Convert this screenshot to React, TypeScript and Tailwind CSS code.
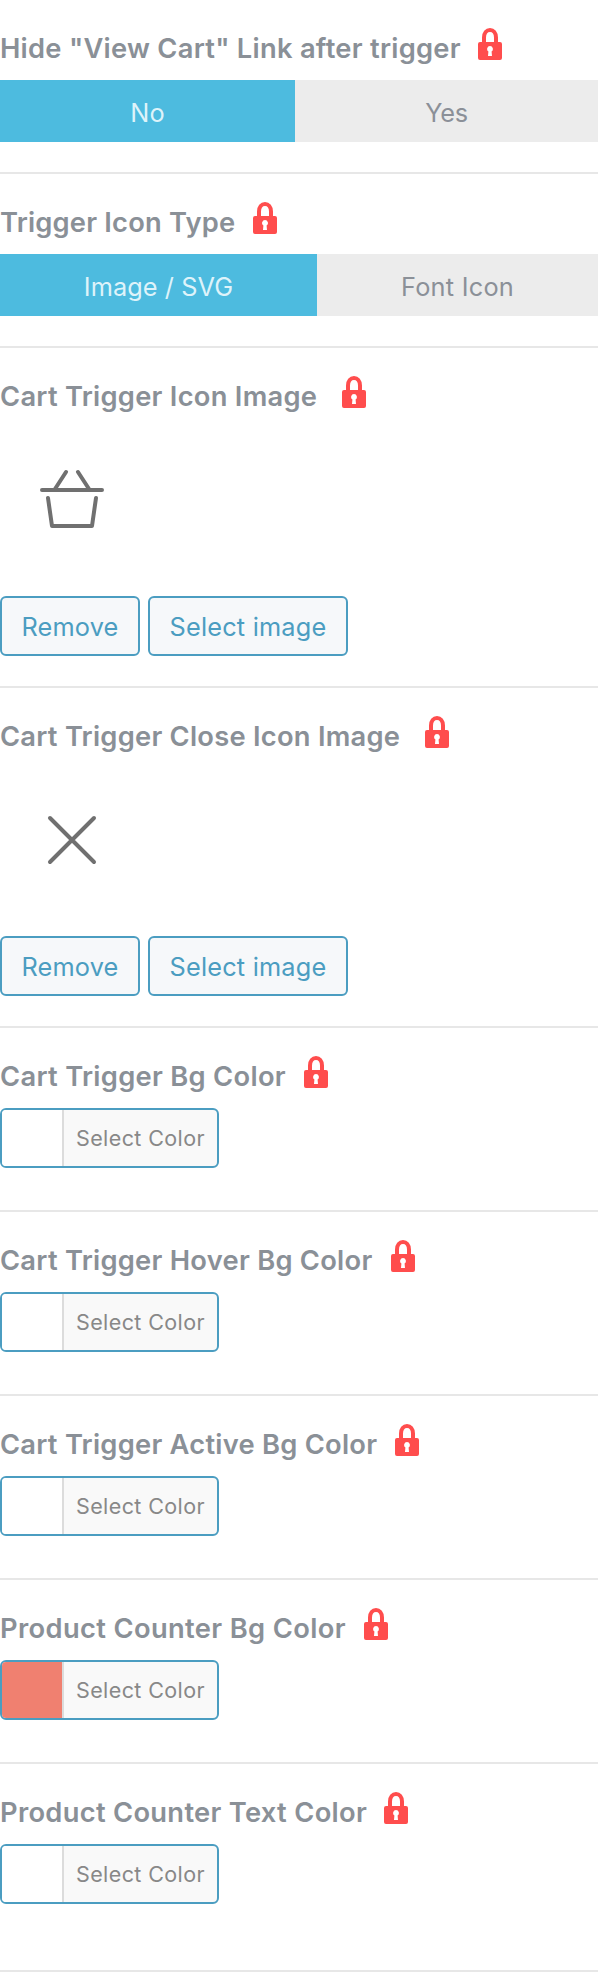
import type { ReactNode } from "react";

function Lock() {
  return (
    <svg width="24" height="32" viewBox="0 0 24 32" className="shrink-0" aria-hidden="true">
      <path d="M6 15V9.6C6 5 8.6 2 12 2s6 3 6 7.6V15" fill="none" stroke="#ff4d4d" strokeWidth="4" />
      <path
        fillRule="evenodd"
        fill="#ff4d4d"
        d="M2 14h20a2 2 0 0 1 2 2v14a2 2 0 0 1-2 2H2a2 2 0 0 1-2-2V16a2 2 0 0 1 2-2ZM12 18a3 3 0 0 0-1.6 5.5L10 28h4l-.4-4.5A3 3 0 0 0 12 18Z"
      />
    </svg>
  );
}

function Setting({
  label,
  tracking,
  labelWidth,
  height,
  children,
}: {
  label: string;
  tracking: string;
  labelWidth: string;
  height: string;
  children: ReactNode;
}) {
  return (
    <section className={`${height} border-b-2 border-[#e7e7e7] pt-7`}>
      <div className="flex h-[52px] items-start">
        <h3
          className={`${labelWidth} ${tracking} mt-1 shrink-0 text-[27.3px] leading-[34px] font-semibold whitespace-nowrap text-[#8a9097]`}
        >
          {label}
        </h3>
        <Lock />
      </div>
      {children}
    </section>
  );
}

function Toggle({ children }: { children: ReactNode }) {
  return <div className="flex h-[62px] bg-[#ececec] text-[25.3px] leading-[65px] text-[#8b9098]">{children}</div>;
}

function ImagePicker({ children }: { children: ReactNode }) {
  return (
    <>
      <div className="h-[168px] pt-10 pl-10">{children}</div>
      <div className="flex gap-2 text-[25.3px] text-[#4b9dc1]">
        <button className="h-[60px] w-[140px] rounded-md border-2 border-[#4b9dc1] bg-[#f6f8fa] pt-0.5 tracking-[0.2px]">
          Remove
        </button>
        <button className="h-[60px] w-[200px] rounded-md border-2 border-[#4b9dc1] bg-[#f6f8fa] pt-0.5 tracking-[0.2px] whitespace-nowrap">
          Select image
        </button>
      </div>
    </>
  );
}

function ColorPicker({ swatch = "bg-white" }: { swatch?: string }) {
  return (
    <button className="flex h-[60px] w-[219px] overflow-hidden rounded-md border-2 border-[#4b9dc1] bg-[#f9f9f9]">
      <span className={`h-full w-[60px] shrink-0 ${swatch}`} />
      <span className="h-full flex-1 border-l-2 border-[#dcdcdc] text-center text-[21.5px] leading-[56px] tracking-[0.4px] whitespace-nowrap text-[#888888]">
        Select Color
      </span>
    </button>
  );
}

export default function App() {
  return (
    <main className="w-[598px] bg-white font-['Inter',sans-serif]">
      <Setting label={'Hide "View Cart" Link after trigger'} tracking="tracking-[0.27px]" labelWidth="w-[478px]" height="h-[174px]">
        <Toggle>
          <span className="w-[295px] bg-[#4dbbdf] text-center tracking-[0.1px] text-[#def3fa]">No</span>
          <span className="flex-1 text-center tracking-[-0.2px]">Yes</span>
        </Toggle>
      </Setting>
      <Setting label="Trigger Icon Type" tracking="tracking-[0.2px]" labelWidth="w-[253px]" height="h-[174px]">
        <Toggle>
          <span className="w-[317px] bg-[#4dbbdf] text-center tracking-[0.08px] text-[#def3fa]">Image / SVG</span>
          <span className="flex-1 text-center tracking-[0.25px]">Font Icon</span>
        </Toggle>
      </Setting>
      <Setting label="Cart Trigger Icon Image" tracking="tracking-[0.27px]" labelWidth="w-[342px]" height="h-[340px]">
        <ImagePicker>
          <svg width="64" height="64" viewBox="0 0 64 64" fill="none" stroke="#707070" strokeWidth="4" strokeLinecap="round" strokeLinejoin="round">
            <path d="M2 22H62M26 4 15 21M38 4 49 21M8 30 12 58H52L56 30" />
          </svg>
        </ImagePicker>
      </Setting>
      <Setting label="Cart Trigger Close Icon Image" tracking="tracking-[0.25px]" labelWidth="w-[425px]" height="h-[340px]">
        <ImagePicker>
          <svg width="64" height="64" viewBox="0 0 64 64" fill="none" stroke="#707070" strokeWidth="4" strokeLinecap="round">
            <path d="M10 10 54 54M54 10 10 54" />
          </svg>
        </ImagePicker>
      </Setting>
      <Setting label="Cart Trigger Bg Color" tracking="tracking-[0.3px]" labelWidth="w-[304px]" height="h-[184px]">
        <ColorPicker />
      </Setting>
      <Setting label="Cart Trigger Hover Bg Color" tracking="tracking-[0.26px]" labelWidth="w-[391px]" height="h-[184px]">
        <ColorPicker />
      </Setting>
      <Setting label="Cart Trigger Active Bg Color" tracking="tracking-[0.25px]" labelWidth="w-[395px]" height="h-[184px]">
        <ColorPicker />
      </Setting>
      <Setting label="Product Counter Bg Color" tracking="tracking-[0.36px]" labelWidth="w-[364px]" height="h-[184px]">
        <ColorPicker swatch="bg-[#f08070]" />
      </Setting>
      <Setting label="Product Counter Text Color" tracking="tracking-[0.3px]" labelWidth="w-[384px]" height="h-[208px]">
        <ColorPicker />
      </Setting>
    </main>
  );
}
